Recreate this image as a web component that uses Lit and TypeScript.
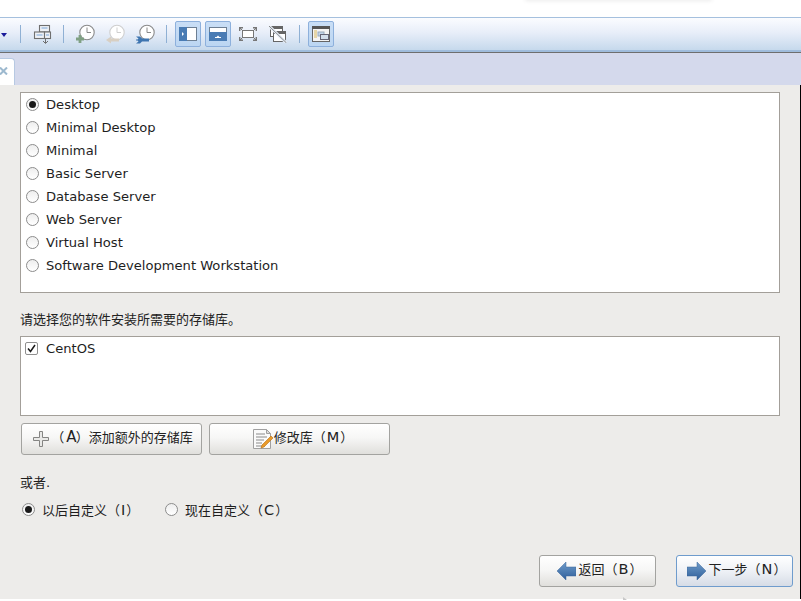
import { LitElement, html, css, svg } from "lit";
import { customElement } from "lit/decorators.js";

const clock = (cx: number, cy: number, c: string) => svg`
  <circle cx=${cx} cy=${cy} r="7.2" fill="#fff" stroke=${c} stroke-width="1.1"/>
  <path d="M${cx} ${cy - 5}V${cy}H${cx + 4}" fill="none" stroke=${c} stroke-width="1"/>`;

const ICONS = {
  tree: svg`<g fill="#eef1f6" stroke="#6f6f6f" stroke-width="1.1">
    <rect x="8.500" y="3.500" width="10" height="6.500"/><rect x="3.500" y="10" width="10" height="6.500"/><rect x="13.500" y="10" width="6" height="6.500"/></g>
    <path d="M10.500 6h6M5.500 13h6M15 13h3" stroke="#b4cbe6" stroke-width="2"/>
    <path d="M14.500 16.500v4.500M12 19l2.500 2.500L17 19" fill="none" stroke="#6f6f6f"/>`,
  add: svg`${clock(14, 10.5, "#8a8a8a")}<path d="M7 13v8M3 17h8" stroke="#7fa083" stroke-width="2.800"/>`,
  back: svg`${clock(14, 10.5, "#cfcfcf")}<path d="M16 18H7" stroke="#d8cfc2" stroke-width="3"/><path d="M8 14.500v7L3 18z" fill="#d8cfc2"/>`,
  wrench: svg`${clock(14, 10.5, "#8a8a8a")}<path d="M3 14.500h4l2 2h7v3H9l-2 2H3l2.500-2-1-1H3v-1h1.500l1-1z" fill="#3e75b0"/>`,
};

@customElement("app-root")
export class AppRoot extends LitElement {
  static styles = css`
    :host {
      display: flex;
      flex-direction: column;
      width: 801px;
      height: 601px;
      overflow: hidden;
      background: #fff;
      font-family: "DejaVu Sans", "Noto Sans CJK SC", sans-serif;
      font-size: 13.1px;
      color: #1e1e1e;
      position: relative;
    }
    .top {
      height: 17px;
      flex: none;
      background: #fff;
      position: relative;
      overflow: hidden;
    }
    .shadow {
      position: absolute;
      left: 525px;
      width: 187px;
      top: -6px;
      height: 6px;
      box-shadow: 0 1px 4px rgba(0, 0, 0, 0.08);
    }
    .toolbar {
      flex: none;
      height: 32px;
      border-top: 1px solid #a5c0de;
      border-bottom: 2px solid #9fbcdc;
      background: linear-gradient(#fbfcff, #e8eef9 45%, #c6d9ec);
      display: flex;
      align-items: center;
    }
    .rule {
      height: 1px;
      flex: none;
      background: #6e6e6e;
    }
    .dd {
      width: 0;
      height: 0;
      border: 3px solid transparent;
      border-top: 4px solid #1a1a9a;
      border-bottom: 0;
      margin-left: 1px;
      flex: none;
      transform: translateY(1px);
    }
    .sep {
      width: 1px;
      height: 18px;
      background: #8fb0d4;
      flex: none;
    }
    .ic {
      width: 24px;
      height: 24px;
      flex: none;
      display: block;
    }
    .tbtn {
      width: 26px;
      height: 26px;
      flex: none;
      box-sizing: border-box;
      border: 1px solid #8db0dc;
      border-radius: 2px;
      background: linear-gradient(#c9def6, #bcd6f2);
      display: flex;
      align-items: center;
      justify-content: center;
    }
    .plain {
      width: 24px;
      height: 24px;
      flex: none;
      display: flex;
      align-items: center;
      justify-content: center;
    }
    .m4 { margin-left: 4px; }
    .m5 { margin-left: 5px; }
    .m6 { margin-left: 6px; }
    .m8 { margin-left: 8px; }
    .m9 { margin-left: 9px; }
    .m10 { margin-left: 10px; }
    .m13 { margin-left: 13px; }
    .tabs {
      flex: none;
      height: 32px;
      background: #d4d9ec;
      display: flex;
      align-items: flex-end;
    }
    .tab {
      width: 15px;
      height: 27px;
      box-sizing: border-box;
      background: #fff;
      border: 1px solid #b7c9e2;
      border-left: 0;
      border-bottom: 0;
      border-top-right-radius: 4px;
      display: flex;
      align-items: center;
      justify-content: flex-start;
      padding-bottom: 2px;
    }
    .main {
      flex: 1;
      min-height: 0;
      background: #edecea;
      padding: 7px 20px 0 20px;
      display: flex;
      flex-direction: column;
      border-right: 1px solid #000;
      margin-bottom: 2px;
    }
    .box {
      background: #fff;
      border: 1px solid #a39f99;
      box-sizing: border-box;
      flex: none;
    }
    .b1 {
      height: 201px;
    }
    .b2 {
      height: 80px;
      margin-top: 6px;
    }
    .item {
      height: 23px;
      display: flex;
      align-items: center;
      gap: 7px;
      padding-left: 5px;
    }
    .citem {
      gap: 8px;
      padding-left: 4px;
    }
    .label {
      height: 20px;
      margin-top: 17px;
      line-height: 20px;
      font-size: 13px;
      color: #222;
    }
    .radio {
      width: 13px;
      height: 13px;
      box-sizing: border-box;
      flex: none;
      border-radius: 50%;
      border: 1px solid #8c8c8c;
      background: linear-gradient(#eeeeee, #fff);
      display: flex;
      align-items: center;
      justify-content: center;
    }
    .radio.on::after {
      content: "";
      width: 7px;
      height: 7px;
      border-radius: 50%;
      background: #1a1a1a;
    }
    .check {
      width: 13px;
      height: 13px;
      box-sizing: border-box;
      flex: none;
      border: 1px solid #8f8f8f;
      border-radius: 2px;
      background: #fff;
      display: flex;
    }
    .buttons {
      display: flex;
      gap: 7px;
      margin: 7px 0 0 1px;
    }
    .btn {
      box-sizing: border-box;
      height: 32px;
      border: 1px solid #a3a3a0;
      border-radius: 3px;
      background: linear-gradient(#ffffff, #f7f7f6 45%, #e0dfdc);
      display: flex;
      align-items: center;
      justify-content: center;
      font-size: 13px;
      color: #222;
      flex: none;
    }
    .txt {
      margin-bottom: 2px;
      line-height: 16px;
      white-space: nowrap;
    }
    .k {
      font-size: 14.5px;
      margin: 0 1px;
      line-height: 14px;
    }
    .tight {
      margin: 0 -1px;
      font-size: 15px;
    }
    .lp {
      margin: 0 3px 0 -3px;
    }
    .w181 {
      width: 181px;
    }
    .w117 {
      width: 117px;
    }
    .plus {
      margin: 0 5px 0 3px;
    }
    .pen {
      margin-left: 6px;
    }
    .ar {
      margin: 0 3px 0 4px;
    }
    .or {
      margin-top: 19px;
      height: 18px;
      line-height: 18px;
      font-size: 13px;
    }
    .choices {
      display: flex;
      align-items: center;
      margin: 8px 0 0 2px;
      height: 18px;
      font-size: 13px;
    }
    .choice {
      display: flex;
      align-items: center;
      gap: 7px;
    }
    .c1 {
      width: 143px;
    }
    .nav {
      display: flex;
      justify-content: flex-end;
      gap: 20px;
      margin-top: 37px;
      margin-right: -13px;
    }
    .focus {
      border: 1px solid #6f9ccd;
      background: linear-gradient(#ffffff, #eef1f6 50%, #d6dce6);
    }
    .cursor {
      position: absolute;
      left: 623px;
      top: 597px;
    }
  `;

  render() {
    const items = [
      "Desktop",
      "Minimal Desktop",
      "Minimal",
      "Basic Server",
      "Database Server",
      "Web Server",
      "Virtual Host",
      "Software Development Workstation",
    ];
    return html`
      <div class="top"><div class="shadow"></div></div>
      <div class="toolbar">
        <div class="dd"></div>
        <div class="sep m13"></div>
        <svg class="ic m10" viewBox="0 0 24 24">${ICONS.tree}</svg>
        <div class="sep m8"></div>
        <svg class="ic m9" viewBox="0 0 24 24">${ICONS.add}</svg>
        <svg class="ic m6" viewBox="0 0 24 24">${ICONS.back}</svg>
        <svg class="ic m6" viewBox="0 0 24 24">${ICONS.wrench}</svg>
        <div class="sep m9"></div>
        <div class="tbtn m8">
          <svg width="18" height="14" viewBox="0 0 18 14"><rect x=".5" y=".5" width="17" height="13" fill="#fff" stroke="#6d7f93"/><rect width="8" height="14" fill="#4a7cb4"/><path d="M3 5l2 2-2 2z" fill="#fff"/></svg>
        </div>
        <div class="tbtn m4">
          <svg width="18" height="14" viewBox="0 0 18 14"><rect x=".5" y=".5" width="17" height="13" fill="#fff" stroke="#6d7f93"/><rect y="5" width="18" height="9" fill="#4a7cb4"/><path d="M7.500 10h3L9 8.500zM6 10h6v1H6z" fill="#fff"/></svg>
        </div>
        <div class="plain m5">
          <svg width="18" height="14" viewBox="0 0 18 14"><rect x="3.500" y="3.500" width="11" height="7" fill="#fff" stroke="#777"/><path d="M.7 4V.7H4M14 .7h3.300V4M.7 10v3.300H4M17.300 10v3.300H14" fill="none" stroke="#777" stroke-width="1.400"/><path d="M1 1l2 2M17 1l-2 2M1 13l2-2M17 13l-2-2" stroke="#777"/></svg>
        </div>
        <div class="plain m6">
          <svg width="18" height="17" viewBox="0 0 18 17"><rect x="1.500" y=".5" width="12" height="10" fill="#fff" stroke="#666"/><rect x="1" width="13" height="3" fill="#666"/><rect x="4.500" y="5.500" width="12" height="10" fill="#fff" stroke="#666"/><rect x="4" y="5" width="13" height="3" fill="#666"/><path d="M0 0l17.500 17" stroke="#e4ecf6" stroke-width="3"/><path d="M0 0l17.500 17" stroke="#888"/></svg>
        </div>
        <div class="sep m9"></div>
        <div class="tbtn m8">
          <svg width="18" height="16" viewBox="0 0 18 16"><rect x=".5" y=".5" width="17" height="15" fill="#f4f4f4" stroke="#666"/><rect width="18" height="3" fill="#555"/><path d="M2 5h3M2 7h3M2 9h3M2 11h3" stroke="#d9b95c"/><rect x="6" y="6" width="6" height="4" fill="#c3d6ea" stroke="#9ab"/><rect x="8.500" y="8.500" width="8" height="5" fill="#d3dfec" stroke="#667"/></svg>
        </div>
      </div>
      <div class="rule"></div>
      <div class="tabs">
        <div class="tab">
          <svg width="8" height="8" viewBox="0 0 8 8"><path d="M0 .5l7 7M7 .5l-7 7" stroke="#9db9cf" stroke-width="2"/></svg>
        </div>
      </div>
      <div class="main">
        <div class="box b1">
          ${items.map(
            (t, i) => html`<div class="item"><span class="radio ${i === 0 ? "on" : ""}"></span><span>${t}</span></div>`
          )}
        </div>
        <div class="label">请选择您的软件安装所需要的存储库。</div>
        <div class="box b2">
          <div class="item citem">
            <span class="check">
              <svg width="11" height="11" viewBox="0 0 11 11"><path d="M2 5.500l2.500 3L9 2" fill="none" stroke="#1a1a1a" stroke-width="1.500"/></svg>
            </span>
            <span>CentOS</span>
          </div>
        </div>
        <div class="buttons">
          <div class="btn w181">
            <svg class="plus" width="16" height="16" viewBox="0 0 16 16"><path d="M6.500.5h3v6h6v3h-6v6h-3v-6h-6v-3h6z" fill="#e9e9e7" stroke="#858583"/></svg>
            <span class="txt"><span class="lp">（</span><span class="k tight">A</span>）添加额外的存储库</span>
          </div>
          <div class="btn w181">
            <svg class="pen" width="22" height="22" viewBox="0 0 22 22"><path d="M1.500 1.500h13l4 4v15h-17z" fill="#fafafa" stroke="#a0a0a0"/><path d="M14.500 1.500v4h4z" fill="#ddd" stroke="#a0a0a0"/><path d="M4 6h9M4 9h11M4 12h8M4 15h6M4 18h9" stroke="#8a8a8a"/><path d="M10 17l9-9 2 2-9 9-3 1z" fill="#e99a2a" stroke="#b96f10" stroke-width=".6"/></svg>
            <span class="txt">修改库（<span class="k">M</span>）</span>
          </div>
        </div>
        <div class="or">或者.</div>
        <div class="choices">
          <div class="choice c1"><span class="radio on"></span><span>以后自定义（<span class="k">I</span>）</span></div>
          <div class="choice"><span class="radio"></span><span>现在自定义（<span class="k">C</span>）</span></div>
        </div>
        <div class="nav">
          <div class="btn w117">
            <svg class="ar" width="19" height="20" viewBox="0 0 19 20"><defs><linearGradient id="g1" x1="0" y1="0" x2="0" y2="1"><stop offset="0" stop-color="#6f9ccb"/><stop offset="1" stop-color="#2f5f9a"/></linearGradient></defs><path d="M0 10l9-9v5h10v9H9v4z" fill="url(#g1)" stroke="#3a6598" stroke-width=".5"/></svg>
            <span class="txt">返回（<span class="k">B</span>）</span>
          </div>
          <div class="btn w117 focus">
            <svg class="ar" width="19" height="20" viewBox="0 0 19 20"><defs><linearGradient id="g2" x1="0" y1="0" x2="0" y2="1"><stop offset="0" stop-color="#6f9ccb"/><stop offset="1" stop-color="#2f5f9a"/></linearGradient></defs><path d="M19 10l-9-9v5H0v9h10v4z" fill="url(#g2)" stroke="#3a6598" stroke-width=".5"/></svg>
            <span class="txt">下一步（<span class="k">N</span>）</span>
          </div>
        </div>
      </div>
      <svg class="cursor" width="5" height="3" viewBox="0 0 5 3"><path d="M0 0l4 3H0z" fill="#c8c8c8"/></svg>
    `;
  }
}
